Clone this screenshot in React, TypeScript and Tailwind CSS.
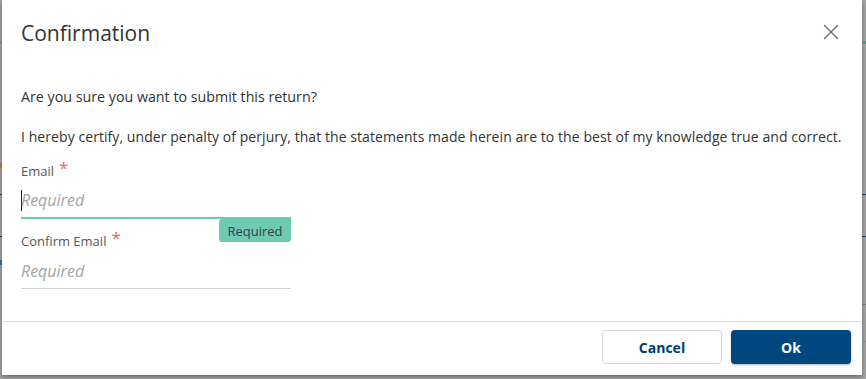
import { X } from "lucide-react"

function Field({ label, active }: { label: string; active?: boolean }) {
  return (
    <div className="relative w-[270px]">
      <div className="flex items-start h-[18px] text-[13px] leading-[18px] text-[#555]">
        <span>{label}</span>
        <span className="ml-[5px] -mt-[3px] text-[17px] leading-[18px] text-[#e36767]">*</span>
      </div>
      <div
        className={
          "flex items-center pt-[3px] h-[39px] " +
          (active ? "border-b-2 border-[#6ccbb0]" : "border-b border-[#cfcfcf]")
        }
      >
        {active && <span className="w-px h-[21px] bg-[#222] mr-[-1px]" />}
        <span className="italic text-[16px] text-[#a5a5a5]">Required</span>
      </div>
      {active && (
        <div className="absolute right-0 top-full w-[72px] h-[23px] flex items-center justify-center bg-[#6ccbb0] rounded-b-[3px] rounded-tl-[3px] text-[13px] text-[#3b3b4f]">
          Required
        </div>
      )}
    </div>
  )
}

export default function App() {
  return (
    <div
      className="relative w-[866px] h-[379px] overflow-hidden bg-[#a2a2a2]"
      style={{ fontFamily: '"Open Sans", "Noto Sans", sans-serif' }}
    >
      {/* bits of the page underneath the overlay */}
      <div className="absolute right-0 top-[41px] w-[4px] h-[3px] bg-[#4e9a80]" />
      <div className="absolute right-0 top-[194px] w-[4px] h-px bg-[#1d3d66]" />
      <div className="absolute right-0 top-[236px] w-[4px] h-px bg-[#1d3d66]" />
      <div className="absolute right-0 top-[304px] w-[4px] h-px bg-[#7a7a7a]" />
      <div className="absolute right-0 top-[341px] w-[4px] h-px bg-[#8a8a8a]" />
      <div className="absolute left-0 top-[41px] w-[2px] h-[3px] bg-[#4e9a80]" />
      <div className="absolute left-0 top-[163px] w-[2px] h-[5px] bg-[#b06a2c]" />
      <div className="absolute left-0 top-[194px] w-[2px] h-px bg-[#1d3d66]" />
      <div className="absolute left-0 top-[236px] w-[2px] h-px bg-[#1d3d66]" />
      <div className="absolute left-0 top-[260px] w-[2px] h-[5px] bg-[#35618f]" />

      <div className="ml-[2px] w-[860px] h-[375px] bg-white flex flex-col shadow-[0_2px_4px_rgba(0,0,0,0.35)]">
        <div className="h-[66px] pl-[19px] pr-[18px] pt-[2px] flex items-center justify-between">
          <h2 className="text-[21px] text-[#333]">Confirmation</h2>
          <X className="w-[26px] h-[26px] -mt-[4px] text-[#666]" strokeWidth={1.2} />
        </div>

        <div className="flex-1 px-[19px] pt-[21px] text-[14.25px] leading-[20px] text-[#333] whitespace-nowrap">
          <p>Are you sure you want to submit this return?</p>
          <p className="mt-[20px] text-[14px] tracking-[0.07px]">
            I hereby certify, under penalty of perjury, that the statements made herein are to the best of my
            knowledge true and correct.
          </p>
          <div className="mt-[15px] flex flex-col gap-[13px]">
            <Field label="Email" active />
            <Field label="Confirm Email" />
          </div>
        </div>

        <div className="h-[54px] border-t border-[#dcdcdc] flex items-start justify-end gap-[9px] pt-[8px] pr-[11px]">
          <button className="w-[120px] h-[34px] rounded-[4px] border border-[#d6d6d6] bg-white text-[14px] font-bold text-[#003e72]">
            Cancel
          </button>
          <button className="w-[120px] h-[34px] rounded-[4px] bg-[#00467f] text-[14px] font-bold text-white shadow-[0_1px_2px_rgba(0,0,0,0.3)]">
            Ok
          </button>
        </div>
      </div>
    </div>
  )
}
